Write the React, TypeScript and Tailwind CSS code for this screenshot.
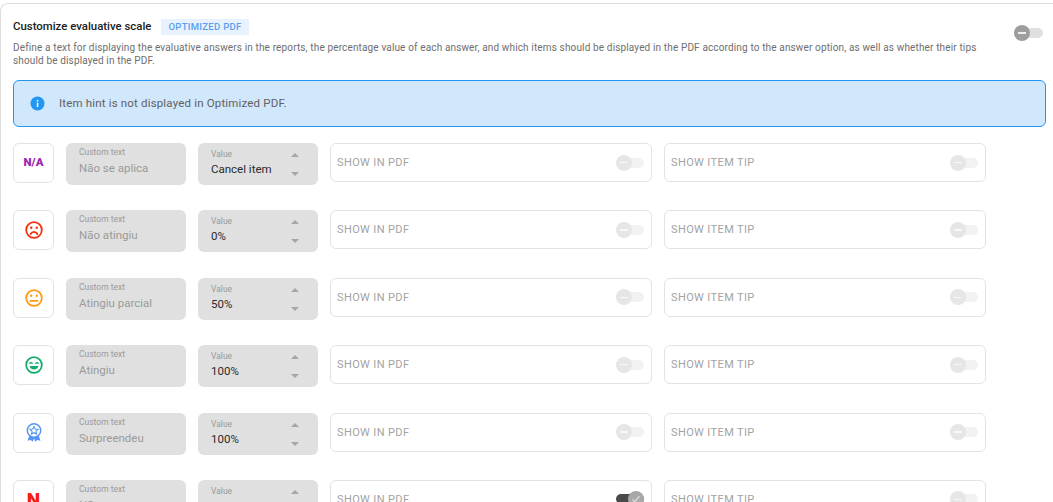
import type { ReactNode } from "react";

interface ScaleRow {
  icon: ReactNode;
  text: string;
  value: string;
  pdfOn?: boolean;
}

function Frown() {
  return (
    <svg width="18" height="18" viewBox="0 0 18 18" fill="none" stroke="#f4300f" strokeWidth="1.800">
      <circle cx="9" cy="9" r="7.800" />
      <circle cx="6.200" cy="6.800" r="1.200" fill="#f4300f" stroke="none" />
      <circle cx="11.800" cy="6.800" r="1.200" fill="#f4300f" stroke="none" />
      <path d="M5.600 13c.8-1.500 2-2.200 3.400-2.200s2.600.7 3.400 2.200" strokeLinecap="round" />
    </svg>
  );
}

function Neutral() {
  return (
    <svg width="18" height="18" viewBox="0 0 18 18" fill="none" stroke="#ff9814" strokeWidth="1.800">
      <circle cx="9" cy="9" r="7.800" />
      <circle cx="6.200" cy="6.800" r="1.200" fill="#ff9814" stroke="none" />
      <circle cx="11.800" cy="6.800" r="1.200" fill="#ff9814" stroke="none" />
      <path d="M5.400 11.800h7.200" strokeLinecap="round" />
    </svg>
  );
}

function Grin() {
  return (
    <svg width="18" height="18" viewBox="0 0 18 18" fill="none" stroke="#12ad6b" strokeWidth="1.800">
      <circle cx="9" cy="9" r="7.800" />
      <path d="M4.800 7.400c.5-1 1.900-1 2.400 0M10.800 7.400c.5-1 1.900-1 2.400 0" strokeWidth="1.300" strokeLinecap="round" />
      <path d="M4.700 10h8.600c-.3 2.200-2 3.600-4.300 3.600S5 12.200 4.700 10z" fill="#12ad6b" stroke="none" />
    </svg>
  );
}

function Medal() {
  return (
    <svg width="16" height="19" viewBox="0 0 16 19" fill="none">
      <path d="M3.500 12l-2 5.800 3.200-.8 2 1.800 1.300-3.300 1.300 3.300 2-1.800 3.200.8-2-5.800z" fill="#5496f2" />
      <circle cx="8" cy="7.500" r="6.700" fill="#fff" stroke="#5496f2" strokeWidth="1.500" />
      <path d="M8 3.600l1.200 2.500 2.800.35-2.050 1.900.55 2.750L8 9.750 5.500 11.100l.55-2.750L4 6.450l2.800-.35z" fill="none" stroke="#5496f2" strokeWidth="1.100" />
    </svg>
  );
}

const rows: ScaleRow[] = [
  {
    icon: <span className="text-[11.500px] font-black leading-none text-[#9c27b0]">N/A</span>,
    text: "Não se aplica",
    value: "Cancel item",
  },
  { icon: <Frown />, text: "Não atingiu", value: "0%" },
  { icon: <Neutral />, text: "Atingiu parcial", value: "50%" },
  { icon: <Grin />, text: "Atingiu", value: "100%" },
  { icon: <Medal />, text: "Surpreendeu", value: "100%" },
  {
    icon: <span className="text-[19px] font-black leading-none text-[#f4200f]">N</span>,
    text: "Não",
    value: "",
    pdfOn: true,
  },
];

function Toggle({ on, strong }: { on?: boolean; strong?: boolean }) {
  if (on) {
    return (
      <span className="relative flex h-[10px] w-[28px] items-center rounded-full bg-[#4a4a4a]">
        <span className="absolute right-0 flex h-4 w-4 items-center justify-center rounded-full bg-[#a8a8a8]">
          <svg width="10" height="10" viewBox="0 0 10 10" fill="none" stroke="#d8d8d8" strokeWidth="1.400">
            <path d="M1.500 5.500l2.300 2.300 4.700-5.600" />
          </svg>
        </span>
      </span>
    );
  }
  return (
    <span
      className={`relative flex h-[10px] items-center rounded-full ${
        strong ? "w-[29px] bg-[#e0e0e0]" : "w-[28px] bg-[#f2f2f2]"
      }`}
    >
      <span
        className={`absolute left-0 flex h-4 w-4 items-center justify-center rounded-full ${
          strong ? "bg-[#9e9e9e]" : "bg-[#e6e6e6]"
        }`}
      >
        <span className={`h-[1.500px] w-2 ${strong ? "bg-[#eeeeee]" : "bg-[#f8f8f8]"}`} />
      </span>
    </span>
  );
}

function OptionBox({ label, on }: { label: string; on?: boolean }) {
  return (
    <div className="flex h-[39px] w-[322px] items-center justify-between rounded-md border border-[#e3e3e3] pl-[6px] pr-[7px]">
      <span className="text-[11px] leading-none tracking-[0.38px] text-[#a3a3a3]">{label}</span>
      <Toggle on={on} />
    </div>
  );
}

function Row({ row }: { row: ScaleRow }) {
  return (
    <div className="flex h-[42px] items-start gap-3">
      <div className="flex h-[40px] w-[41px] shrink-0 items-center justify-center rounded-md border border-[#e3e3e3]">
        {row.icon}
      </div>
      <div className="h-[42px] w-[120px] shrink-0 rounded-md bg-[#e0e0e0] pl-[13px] pt-[4px]">
        <div className="text-[8.500px] leading-[10px] text-[#9a9a9a]">Custom text</div>
        <div className="mt-[4px] text-[11.500px] leading-[14px] text-[#9a9a9a]">{row.text}</div>
      </div>
      <div className="flex h-[42px] w-[120px] shrink-0 items-stretch justify-between rounded-md bg-[#e0e0e0] pl-[13px] pr-[19px]">
        <div className="pt-[6px]">
          <div className="text-[8.500px] leading-[10px] text-[#9a9a9a]">Value</div>
          <div className="mt-[3px] text-[11.500px] leading-[14px] text-[#2b2b2b]">{row.value}</div>
        </div>
        <div className="flex flex-col items-center gap-[15px] pt-[10px]">
          <span className="h-0 w-0 border-x-[4.500px] border-b-[4px] border-x-transparent border-b-[#a6a6a6]" />
          <span className="h-0 w-0 border-x-[4.500px] border-t-[4px] border-x-transparent border-t-[#a6a6a6]" />
        </div>
      </div>
      <OptionBox label="SHOW IN PDF" on={row.pdfOn} />
      <OptionBox label="SHOW ITEM TIP" />
    </div>
  );
}

export default function App() {
  return (
    <div className="h-[502px] overflow-hidden bg-white font-['Roboto',sans-serif]">
      <div className="mt-[3px] h-[600px] rounded-tl-lg border-l border-t border-[#dedede] pl-3 pr-[7px] pt-[15px]">
        <div className="flex items-start justify-between">
          <div className="flex items-start gap-[10px]">
            <h2 className="-mt-[1px] text-[11.400px] font-medium leading-[16px] text-[#212121]">Customize evaluative scale</h2>
            <span className="flex h-4 items-center bg-[#e8f2fd] px-[7px] text-[9.500px] font-medium tracking-[0.3px] text-[#5a9ef0]">
              OPTIMIZED PDF
            </span>
          </div>
          <div className="mr-[3px] mt-[9px]">
            <Toggle strong />
          </div>
        </div>
        <p className="mt-[3px] w-[975px] text-[10px] leading-[13px] tracking-[0.14px] text-[#6e6e6e]">
          Define a text for displaying the evaluative answers in the reports, the percentage value of each answer, and
          which items should be displayed in the PDF according to the answer option, as well as whether their tips
          should be displayed in the PDF.
        </p>
        <div className="mt-[13px] flex h-[47px] items-center gap-[14px] rounded-md border border-[#2196f3] bg-[#d1e7fc] pl-[16px]">
          <svg width="15" height="15" viewBox="0 0 15 15">
            <circle cx="7.500" cy="7.500" r="7" fill="#2196f3" />
            <rect x="6.800" y="6.600" width="1.500" height="4.400" fill="#fff" />
            <rect x="6.800" y="4" width="1.500" height="1.500" fill="#fff" />
          </svg>
          <span className="text-[11.500px] tracking-[0.17px] text-[#616161]">Item hint is not displayed in Optimized PDF.</span>
        </div>
        <div className="mt-[16px] flex flex-col gap-[25.400px]">
          {rows.map((row) => (
            <Row key={row.text} row={row} />
          ))}
        </div>
      </div>
    </div>
  );
}
